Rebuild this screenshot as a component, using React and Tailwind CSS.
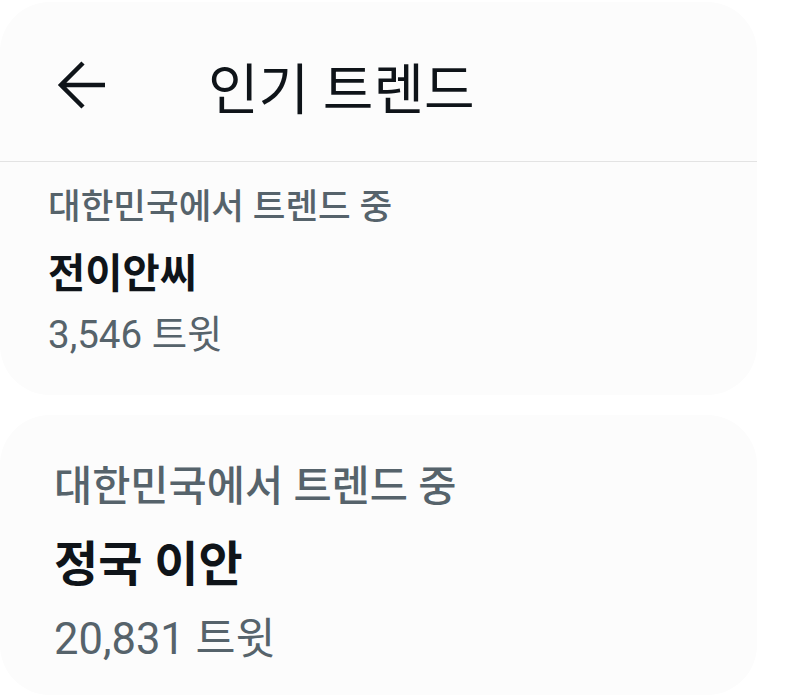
const font = { fontFamily: 'Roboto, "Noto Sans CJK KR", sans-serif' };

function BackArrow() {
    return (
        <svg width="50" height="50" viewBox="0 0 50 50" fill="none" className="mt-[2px] shrink-0">
            <path
                d="M4 25H48M26 3L4 25L26 47"
                stroke="#0f1419"
                strokeWidth="4.5"
                strokeLinecap="butt"
                strokeLinejoin="miter"
            />
        </svg>
    );
}

export default function App() {
    return (
        <div className="min-h-[698px] bg-white pt-[2px] pr-[47px]" style={font}>
            <div className="flex flex-col gap-[20px]">
                {/* trends header card */}
                <div className="rounded-[50px] bg-[#fcfcfc]">
                    <div className="flex items-start h-[159px] pt-[56px] pl-[57px]">
                        <BackArrow />
                        <h1 className="ml-[101px] text-[55px] leading-[64px] font-normal text-[#0f1419]">
                            인기 트렌드
                        </h1>
                    </div>
                    <div className="h-px bg-[#e3e3e3]"></div>
                    <div className="pl-[48px] pt-[25px] pb-[38px]">
                        <p className="text-[35.5px] leading-[40px] font-medium text-[#56636b]">대한민국에서 트렌드 중</p>
                        <p className="mt-[23px] text-[40.5px] leading-[48px] font-bold text-[#0f1419]">전이안씨</p>
                        <p className="mt-[15px] text-[38.5px] leading-[44px] text-[#56636b]">3,546 트윗</p>
                    </div>
                </div>

                {/* second trend card */}
                <div className="rounded-[50px] bg-[#fcfcfc] pl-[54px] pt-[50px] pb-[31px]">
                    <p className="text-[41.5px] leading-[44px] font-medium text-[#56636b]">대한민국에서 트렌드 중</p>
                    <p className="mt-[30px] text-[48px] leading-[52px] font-bold text-[#0f1419]">정국 이안</p>
                    <p className="mt-[25px] text-[43.5px] leading-[48px] text-[#56636b]">20,831 트윗</p>
                </div>
            </div>
        </div>
    );
}
